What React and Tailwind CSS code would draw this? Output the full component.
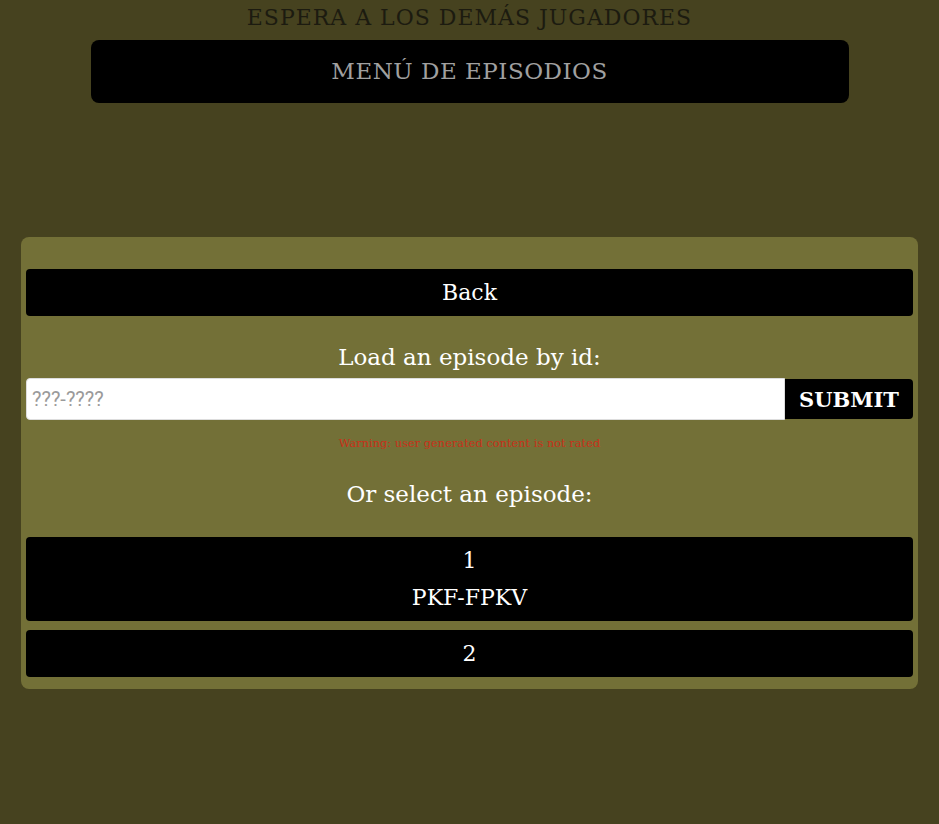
import React from "react";

const serif = { fontFamily: '"DejaVu Serif", "Liberation Serif", serif' };

export default function App() {
  return (
    <div className="min-h-[824px] w-full bg-[#46421f]" style={serif}>
      <div className="flex flex-col items-center">
        <div className="h-[34px] flex items-center justify-center text-[22px] tracking-[1px] text-[#1c1b10] leading-none pt-[1px]">
          ESPERA A LOS DEMÁS JUGADORES
        </div>
        <div className="mt-[6px] w-[758px] h-[63px] rounded-[8px] bg-black flex items-center justify-center text-[23px] tracking-[0.5px] text-[#a0a0a0] leading-none">
          MENÚ DE EPISODIOS
        </div>
      </div>
      <div className="mx-[21px] mt-[134px] rounded-[8px] bg-[#737037] px-[5px] pt-[32px] pb-[12px] flex flex-col">
        <button className="h-[47px] w-full rounded-[4px] bg-black text-white text-[22px] leading-none flex items-center justify-center" style={serif}>
          Back
        </button>
        <div className="h-[62px] flex items-end justify-center pb-[9px] text-white text-[23px] leading-none">
          Load an episode by id:
        </div>
        <div className="flex h-[42px]">
          <input
            className="flex-1 h-[42px] bg-white rounded-l-[4px] px-[5px] text-[20px] text-[#222] placeholder:text-[#9a9a9a] outline-none border border-[#ddd]"
            style={{ fontFamily: 'Roboto, "Liberation Sans", sans-serif' }}
            placeholder="???-????"
          />
          <button className="w-[128px] h-[40px] mt-[1px] bg-black rounded-r-[4px] text-white text-[21px] font-bold leading-none flex items-center justify-center" style={serif}>
            SUBMIT
          </button>
        </div>
        <div className="h-[48px] flex items-center justify-center text-[#c8301a] text-[11.4px] leading-none">
          Warning: user generated content is not rated
        </div>
        <div className="mt-[11px] h-[30px] flex items-center justify-center text-white text-[23px] leading-none">
          Or select an episode:
        </div>
        <div className="mt-[28px] flex flex-col gap-[9px]">
          <button className="h-[84px] w-full rounded-[4px] bg-black text-white text-[22px] leading-none flex flex-col items-center justify-center gap-[15px]" style={serif}>
            <span>1</span>
            <span>PKF-FPKV</span>
          </button>
          <button className="h-[47px] w-full rounded-[4px] bg-black text-white text-[22px] leading-none flex items-center justify-center" style={serif}>
            2
          </button>
        </div>
      </div>
    </div>
  );
}
